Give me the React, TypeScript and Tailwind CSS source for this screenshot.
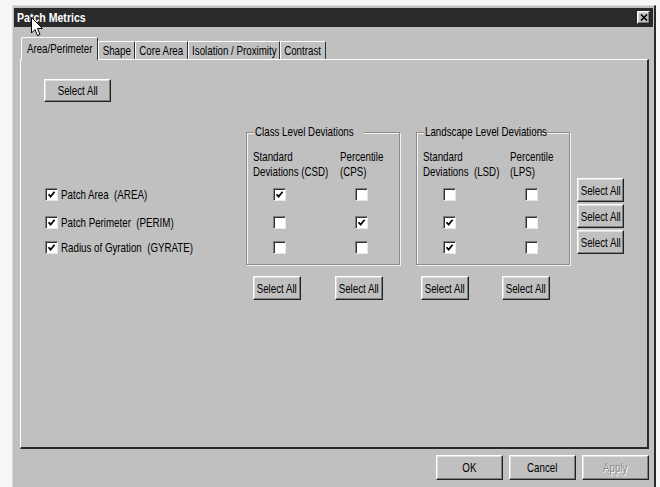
import React from 'react';

const FONT = { fontFamily: '"Liberation Sans", Arial, sans-serif' };

const bevel =
  'border border-t-white border-l-white border-b-[#202020] border-r-[#202020] shadow-[inset_-1px_-1px_0_#808080,inset_1px_1px_0_#dfdfdf] bg-[#c0c0c0]';

// narrow text, like the old MS Sans Serif in the screenshot
const T = ({ children, center = false }: { children: React.ReactNode; center?: boolean }) => (
  <span
    className={`inline-block whitespace-pre scale-x-[0.75] ${center ? 'origin-center' : 'origin-left'}`}
  >
    {children}
  </span>
);

const WinButton = ({
  label,
  className = '',
  disabled = false,
}: {
  label: string;
  className?: string;
  disabled?: boolean;
}) => (
  <div className={`${bevel} flex items-center justify-center text-[13px] leading-none ${className}`}>
    <span className={disabled ? 'text-[#8a8a8a] [text-shadow:1px_1px_0_#fff]' : 'text-black'}>
      <T center>{label}</T>
    </span>
  </div>
);

const CheckBox = ({ checked }: { checked: boolean }) => (
  <div className="w-[13px] h-[13px] bg-white border border-t-[#808080] border-l-[#808080] border-b-[#e8e8e8] border-r-[#e8e8e8] shadow-[inset_1px_1px_0_#303030] flex items-center justify-center shrink-0">
    {checked && (
      <svg width="9" height="9" viewBox="0 0 9 9">
        <path d="M1.5 4.2 L3.6 6.6 L7.6 1.8" fill="none" stroke="#000" strokeWidth="1.7" />
      </svg>
    )}
  </div>
);

const DeviationGroup = ({
  title,
  col1: [h1a, h1b],
  col2: [h2a, h2b],
  values,
  btnGap,
  btnPad,
}: {
  title: string;
  col1: [string, string];
  col2: [string, string];
  values: [boolean, boolean][];
  btnGap: string;
  btnPad: string;
}) => (
  <div className="flex flex-col">
    <div className="relative mt-[7px] w-[154px] h-[133px] border border-[#8c8c8c] shadow-[inset_1px_1px_0_#f2f2f2,1px_1px_0_#f2f2f2] pt-[16px] pl-[6px] flex">
      <span className="absolute -top-[8px] left-[7px] px-[1px] bg-[#c0c0c0] text-[13px] leading-[14px] w-[110px] whitespace-pre">
        <T>{title}</T>
      </span>
      <div className="w-[87px] flex flex-col">
        <div className="text-[13px] leading-[15px]">
          <div><T>{h1a}</T></div>
          <div><T>{h1b}</T></div>
        </div>
        <div className="ml-[20px] mt-[9px]">
          <CheckBox checked={values[0][0]} />
        </div>
        <div className="ml-[20px] mt-[15px]">
          <CheckBox checked={values[1][0]} />
        </div>
        <div className="ml-[20px] mt-[12px]">
          <CheckBox checked={values[2][0]} />
        </div>
      </div>
      <div className="flex flex-col">
        <div className="text-[13px] leading-[15px]">
          <div><T>{h2a}</T></div>
          <div><T>{h2b}</T></div>
        </div>
        <div className="ml-[15px] mt-[9px]">
          <CheckBox checked={values[0][1]} />
        </div>
        <div className="ml-[15px] mt-[15px]">
          <CheckBox checked={values[1][1]} />
        </div>
        <div className="ml-[15px] mt-[12px]">
          <CheckBox checked={values[2][1]} />
        </div>
      </div>
    </div>
    <div className={`flex mt-[11px] ${btnGap} ${btnPad}`}>
      <WinButton label="Select All" className="w-[48px] h-[24px]" />
      <WinButton label="Select All" className="w-[48px] h-[24px]" />
    </div>
  </div>
);

export default function App() {
  const tabs = [
    { label: 'Shape', w: 'w-[37px]' },
    { label: 'Core Area', w: 'w-[53px]' },
    { label: 'Isolation / Proximity', w: 'w-[92px]' },
    { label: 'Contrast', w: 'w-[46px]' },
  ];

  return (
    <div className="relative w-[660px] h-[487px] bg-[#f6f6f6] overflow-hidden pt-[5px] pl-[12px] text-black" style={FONT}>
      {/* Window */}
      <div className="w-[644px] h-[482px] bg-[#c0c0c0] border-l border-t border-[#dcdcdc] border-r-2 border-r-[#2a2a2a] px-[1px] pt-[2px] flex flex-col">
        {/* Title bar */}
        <div className="h-[19px] bg-[#2a2a2a] flex items-center justify-between pl-[3px] pr-[3px]">
          <span className="text-white font-bold text-[12px] leading-none">
            <span className="inline-block whitespace-pre origin-left scale-x-[0.88]">Patch Metrics</span>
          </span>
          <div className={`${bevel} w-[13px] h-[13px] flex items-center justify-center`}>
            <svg width="8" height="7" viewBox="0 0 8 7">
              <path d="M1 0.5 L7 6.5 M7 0.5 L1 6.5" stroke="#000" strokeWidth="1.6" />
            </svg>
          </div>
        </div>

        {/* Tabs */}
        <div className="flex items-end mt-[10px] ml-[7px] h-[22px] relative z-10">
          <div className="w-[77px] h-[23px] -mb-[1px] bg-[#c0c0c0] border-t border-l border-white border-r border-r-[#303030] rounded-t-[2px] flex items-start justify-center pt-[4px] text-[13px] leading-[14px]">
            <T center>Area/Perimeter</T>
          </div>
          {tabs.map((t) => (
            <div
              key={t.label}
              className={`${t.w} h-[18px] border-t border-l border-white border-r border-r-[#303030] flex items-center justify-center text-[13px] leading-none`}
            >
              <T center>{t.label}</T>
            </div>
          ))}
        </div>

        {/* Panel */}
        <div className="ml-[6px] w-[629px] h-[390px] border-t border-l border-white border-r-2 border-b-2 border-r-[#2a2a2a] border-b-[#2a2a2a] flex flex-col">
          <WinButton label="Select All" className="mt-[19px] ml-[23px] w-[67px] h-[23px]" />

          <div className="flex items-start mt-[23px] ml-[24px]">
            {/* Metrics */}
            <div className="w-[201px] pt-[63px] flex flex-col text-[13px] leading-none">
              <div className="flex items-center gap-[3px]">
                <CheckBox checked />
                <T>Patch Area  (AREA)</T>
              </div>
              <div className="flex items-center gap-[3px] mt-[15px]">
                <CheckBox checked />
                <T>Patch Perimeter  (PERIM)</T>
              </div>
              <div className="flex items-center gap-[3px] mt-[12px]">
                <CheckBox checked />
                <T>Radius of Gyration  (GYRATE)</T>
              </div>
            </div>

            <DeviationGroup
              title="Class Level Deviations"
              col1={['Standard', 'Deviations (CSD)']}
              col2={['Percentile', '(CPS)']}
              values={[
                [true, false],
                [false, true],
                [false, false],
              ]}
              btnGap="gap-[34px]"
              btnPad="pl-[7px]"
            />

            <div className="w-[16px] shrink-0" />

            <DeviationGroup
              title="Landscape Level Deviations"
              col1={['Standard', 'Deviations  (LSD)']}
              col2={['Percentile', '(LPS)']}
              values={[
                [false, false],
                [true, false],
                [true, false],
              ]}
              btnGap="gap-[33px]"
              btnPad="pl-[5px]"
            />

            <div className="ml-[7px] pt-[53px] flex flex-col gap-[2px]">
              <WinButton label="Select All" className="w-[47px] h-[24px]" />
              <WinButton label="Select All" className="w-[47px] h-[24px]" />
              <WinButton label="Select All" className="w-[47px] h-[24px]" />
            </div>
          </div>
        </div>

        {/* Dialog buttons */}
        <div className="flex justify-end gap-[6px] mt-[6px] w-[635px]">
          <WinButton label="OK" className="w-[67px] h-[25px]" />
          <WinButton label="Cancel" className="w-[67px] h-[25px]" />
          <WinButton label="Apply" disabled className="w-[67px] h-[25px]" />
        </div>
      </div>

      {/* Mouse cursor */}
      <svg className="absolute left-[31px] top-[17px]" width="13" height="21" viewBox="0 0 13 21">
        <path d="M0.5 0.5 L0.5 16 L4 12.5 L6.5 18.5 L9 17.5 L6.5 11.5 L11.5 11.5 Z" fill="#fff" stroke="#000" strokeWidth="1" />
      </svg>
    </div>
  );
}
